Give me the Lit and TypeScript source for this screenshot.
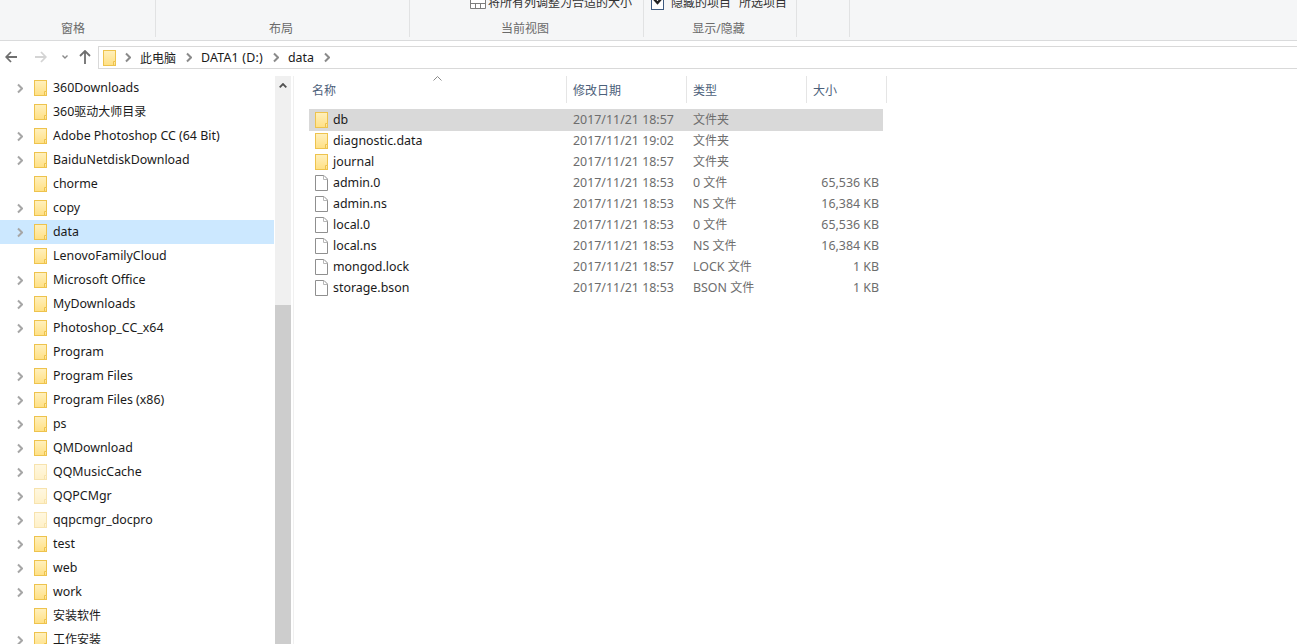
import { LitElement, html, css } from "lit";
import { customElement } from "lit/decorators.js";

const tree: [string, boolean, boolean?][] = [
  ["360Downloads", true], ["360驱动大师目录", false], ["Adobe Photoshop CC (64 Bit)", true],
  ["BaiduNetdiskDownload", true], ["chorme", false], ["copy", true], ["data", true],
  ["LenovoFamilyCloud", false], ["Microsoft Office", true], ["MyDownloads", true],
  ["Photoshop_CC_x64", true], ["Program", false], ["Program Files", true], ["Program Files (x86)", true],
  ["ps", true], ["QMDownload", true], ["QQMusicCache", true, true], ["QQPCMgr", true, true],
  ["qqpcmgr_docpro", true, true], ["test", true], ["web", true], ["work", true], ["安装软件", false], ["工作安装", true],
];
const files: [string, boolean, string, string, string][] = [
  ["db", true, "2017/11/21 18:57", "文件夹", ""],
  ["diagnostic.data", true, "2017/11/21 19:02", "文件夹", ""],
  ["journal", true, "2017/11/21 18:57", "文件夹", ""],
  ["admin.0", false, "2017/11/21 18:53", "0 文件", "65,536 KB"],
  ["admin.ns", false, "2017/11/21 18:53", "NS 文件", "16,384 KB"],
  ["local.0", false, "2017/11/21 18:53", "0 文件", "65,536 KB"],
  ["local.ns", false, "2017/11/21 18:53", "NS 文件", "16,384 KB"],
  ["mongod.lock", false, "2017/11/21 18:57", "LOCK 文件", "1 KB"],
  ["storage.bson", false, "2017/11/21 18:53", "BSON 文件", "1 KB"],
];

/* CJK runs are set at 12px, Latin runs a little larger, as in the reference. */
const t = (s: string) =>
  s.split(/([\u4e00-\u9fff]+)/).map((p, i) => (i % 2 ? html`<span class="cjk">${p}</span>` : p));

const folder = (faded = false) => html`<svg class="ic ${faded ? "faded" : ""}" width="13" height="16" viewBox="0 0 13 16">
  <defs><linearGradient id="fg" x1="0" y1="0" x2="0" y2="1"><stop offset="0" stop-color="#fff0bd"/><stop offset="1" stop-color="#ffe084"/></linearGradient></defs>
  <rect x=".5" y=".5" width="12" height="15" fill="url(#fg)" stroke="#eec34d"/>
  <path d="M10.500 15.500v-4h2" fill="#ffe9a6" stroke="#eec34d"/></svg>`;
const fileIc = html`<svg class="ic" width="13" height="16" viewBox="0 0 13 16">
  <path d="M.5.5h8.500l3.500 3.500v11.500h-12z" fill="#fff" stroke="#8f8f8f"/><path d="M8.500.5v4h4" fill="none" stroke="#b8b8b8"/></svg>`;
const chev = (c = "#a6a6a6") => html`<svg class="ic" width="6" height="11" viewBox="0 0 6 11"><path d="M1 1.500l4 4-4 4" fill="none" stroke="${c}" stroke-width="2"/></svg>`;

@customElement("app-root")
export class AppRoot extends LitElement {
  static styles = css`
    :host { display: block; width: 1297px; height: 644px; overflow: hidden; background: #fff;
      font-family: "Noto Sans", "Noto Sans CJK SC", sans-serif; font-size: 12.4px; color: #1a1a1a; }
    .cjk { font-size: 12px; }
    .ribbon { height: 40px; background: #f5f6f7; border-bottom: 1px solid #dadbdc; display: flex; overflow: hidden; }
    .group { height: 37px; border-right: 1px solid #e1e2e3; color: #6a6a6a; box-sizing: content-box; flex: none; }
    .gtop { height: 21px; overflow: hidden; color: #333; white-space: nowrap; }
    .clip { display: flex; align-items: center; height: 16px; margin-top: -5px; line-height: 16px; }
    .glabel { line-height: 16px; text-align: center; font-size: 12px; }
    .g1 { width: 155px; } .g1 .glabel { padding-right: 9px; }
    .g2 { width: 253px; } .g2 .glabel { padding-right: 3px; }
    .g3 { width: 233px; } .g3 .glabel { padding-right: 3px; } .g3 .clip { padding-left: 60px; gap: 2px; }
    .g4 { width: 152px; } .g4 .glabel { padding-right: 3px; } .g4 .clip { padding-left: 7px; gap: 7px; }
    .g4 .second { margin-left: 1px; }
    .g5 { width: 52px; }
    .toolbar { height: 28px; display: flex; }
    .navs { width: 98px; flex: none; height: 28px; }
    .navs svg { display: block; }
    .navrow { display: flex; align-items: center; height: 22px; margin-top: 5px; padding-left: 5px; }
    .back { margin-right: 18px; } .fwd { margin-right: 15px; } .drop { margin-right: 11px; }
    .addr { flex: 1; box-sizing: border-box; height: 23px; margin-top: 5px; border: solid #d9d9d9; border-width: 1px 0 1px 1px; display: flex; align-items: center; padding-left: 4px; gap: 10px; }
    .addr .first { margin-right: -1px; }
    .addr > svg { margin-right: -1px; }
    .addr .wide { letter-spacing: .2px; }
    .main { display: flex; height: 575px; padding-top: 7px; box-sizing: border-box; }
    .nav { width: 275px; flex: none; overflow: hidden; }
    .tr { height: 24px; display: flex; align-items: center; white-space: nowrap; }
    .tr.sel { background: #cce8ff; margin-right: 1px; }
    .tw { width: 34px; padding-left: 17px; box-sizing: border-box; flex: none; display: flex; }
    .ic { flex: none; display: block; }
    .faded { opacity: .45; }
    .tn { margin-left: 6px; margin-top: -2px; }
    .sb { width: 16px; flex: none; background: #f0f0f0; display: flex; flex-direction: column; margin-right: 2px; }
    .up { height: 28px; box-sizing: border-box; padding-top: 7px; display: flex; justify-content: center; flex: none; }
    .track { height: 201px; flex: none; }
    .thumb { flex: 1; background: #cdcdcd; }
    .list { flex: 1; border-left: 1px solid #f0f0f0; position: relative; }
    .head { height: 27px; display: grid; grid-template-columns: 273px 120px 120px 80px; }
    .hc { border-right: 1px solid #e5e5e5; padding-left: 6px; display: flex; align-items: center; color: #4c607a; font-size: 12px; }
    .hc:first-child { padding-left: 18px; }
    .sort { position: absolute; left: 139px; top: 0; }
    .rows { margin-top: 6px; margin-left: 15px; width: 574px; }
    .r { height: 21px; display: grid; grid-template-columns: 264px 120px 1fr auto; align-items: center; color: #6d6d6d; white-space: nowrap; padding-right: 4px; box-sizing: border-box; }
    .r.sel { background: #d9d9d9; height: 22px; margin-bottom: -1px; padding-bottom: 1px; }
    .r .n { display: flex; align-items: center; gap: 5px; padding-left: 6px; color: #1a1a1a; }
    .r .ty { margin-top: -2px; }
    .r .s { text-align: right; }
  `;
  render() {
    return html`
      <div class="ribbon">
        <div class="group g1"><div class="gtop"></div><div class="glabel">窗格</div></div>
        <div class="group g2"><div class="gtop"></div><div class="glabel">布局</div></div>
        <div class="group g3"><div class="gtop"><div class="clip">
          <svg class="ic" width="16" height="16" viewBox="0 0 16 16"><path d="M.5 2.500h15v11h-15zM.5 8.500h15M5.500 8.500v5M10.500 8.500v5" fill="#fff" stroke="#7d7d7d"/></svg>
          <span class="cjk">将所有列调整为合适的大小</span></div></div><div class="glabel">当前视图</div></div>
        <div class="group g4"><div class="gtop"><div class="clip">
          <svg class="ic" width="13" height="14" viewBox="0 0 13 14"><rect x=".5" y=".5" width="12" height="13" fill="#fff" stroke="#3d5a80"/><path d="M3 3l3.500 4L10 3" fill="none" stroke="#222" stroke-width="2.400"/></svg>
          <span class="cjk">隐藏的项目</span><span class="cjk second">所选项目</span></div></div><div class="glabel">显示/隐藏</div></div>
        <div class="group g5"></div>
      </div>
      <div class="toolbar">
        <div class="navs"><div class="navrow">
          <svg class="back" width="12" height="12" viewBox="0 0 12 12"><path d="M6 1L1.200 6 6 11M1.500 6H12" fill="none" stroke="#6f6f6f" stroke-width="1.800"/></svg>
          <svg class="fwd" width="12" height="12" viewBox="0 0 12 12"><path d="M6 1l4.800 5L6 11M10.500 6H0" fill="none" stroke="#d4d4d4" stroke-width="1.800"/></svg>
          <svg class="drop" width="6" height="4" viewBox="0 0 6 4"><path d="M.5.500L3 3 5.500.500" fill="none" stroke="#8a8a8a" stroke-width="1.400"/></svg>
          <svg width="12" height="14" viewBox="0 0 12 14"><path d="M1 6l5-5 5 5M6 1.500V14" fill="none" stroke="#6f6f6f" stroke-width="1.800"/></svg>
        </div></div>
        <div class="addr"><span class="first">${folder()}</span>${chev("#8a8a8a")}<span>${t("此电脑")}</span>${chev("#8a8a8a")}<span class="wide">DATA1 (D:)</span>${chev("#8a8a8a")}<span>data</span>${chev("#8a8a8a")}</div>
      </div>
      <div class="main">
        <div class="nav">
          ${tree.map(([n, c, f], i) => html`<div class="tr ${i === 6 ? "sel" : ""}"><div class="tw">${c ? chev() : ""}</div>${folder(!!f)}<span class="tn">${t(n)}</span></div>`)}
        </div>
        <div class="sb">
          <div class="up"><svg width="8" height="5" viewBox="0 0 8 5"><path d="M.7 4.300L4 1l3.300 3.300" fill="none" stroke="#505050" stroke-width="1.800"/></svg></div>
          <div class="track"></div><div class="thumb"></div>
        </div>
        <div class="list">
          <svg class="sort" width="9" height="5" viewBox="0 0 9 5"><path d="M.5 4.500l4-4 4 4" fill="none" stroke="#8a8a8a"/></svg>
          <div class="head"><div class="hc">名称</div><div class="hc">修改日期</div><div class="hc">类型</div><div class="hc">大小</div></div>
          <div class="rows">
            ${files.map((f, i) => html`<div class="r ${i === 0 ? "sel" : ""}"><div class="n">${f[1] ? folder() : fileIc}<span>${f[0]}</span></div><div>${f[2]}</div><div class="ty">${t(f[3])}</div><div class="s">${f[4]}</div></div>`)}
          </div>
        </div>
      </div>`;
  }
}
